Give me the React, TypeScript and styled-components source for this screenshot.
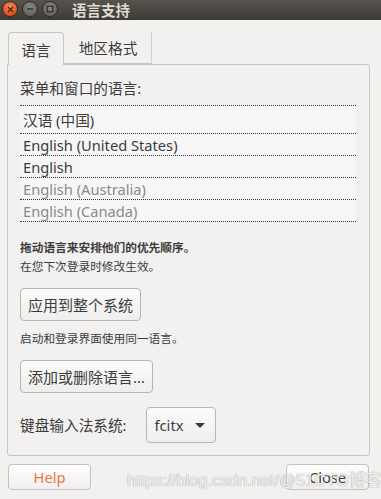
import React from "react";
import styled, { createGlobalStyle } from "styled-components";

const FONT = `"Noto Sans", "Noto Sans CJK SC", "DejaVu Sans", sans-serif`;

const Global = createGlobalStyle`
  html, body { margin: 0; padding: 0; background: #f2f1f0; }
  body { font-family: ${FONT}; color: #3c3c3c; }
  * { box-sizing: border-box; }
`;

const Window = styled.div`
  position: relative;
  width: 381px;
  height: 499px;
  background: #f2f1f0;
  overflow: hidden;
  display: flex;
  flex-direction: column;
`;

const TitleBar = styled.div`
  height: 20px;
  background: linear-gradient(#57534d, #3d3b37);
  display: flex;
  align-items: flex-start;
  padding-left: 2px;
  padding-top: 1px;
  gap: 4px;
`;

const WinBtn = styled.div<{ $close?: boolean }>`
  width: 16px;
  height: 16px;
  border-radius: 50%;
  background: ${(p) =>
    p.$close
      ? "radial-gradient(circle at 50% 35%, #f58a5c, #e1501d 70%)"
      : "radial-gradient(circle at 50% 35%, #8a8883, #67655f 70%)"};
  border: 1px solid #2e2d2a;
  display: flex;
  align-items: center;
  justify-content: center;
`;

const Title = styled.div`
  margin-left: 10px;
  margin-top: -1px;
  font-size: 14.5px;
  font-weight: bold;
  color: #dfdbd2;
  line-height: 20px;
`;

const Body = styled.div`
  flex: 1;
  display: flex;
  flex-direction: column;
  padding: 12px 11px 0 7px;
`;

const TabRow = styled.div`
  display: flex;
  height: 32px;
  position: relative;
  z-index: 1;
  padding-left: 1px;
`;

const Tab = styled.div<{ $active?: boolean }>`
  height: ${(p) => (p.$active ? "33px" : "32px")};
  width: ${(p) => (p.$active ? "56px" : "88px")};
  display: flex;
  align-items: center;
  justify-content: center;
  white-space: nowrap;
  font-size: 14.67px;
  color: #3c3c3c;
  background: #f2f1f0;
  border: 1px solid transparent;
  ${(p) =>
    p.$active
      ? `border-color: #c6c4c0; border-bottom: none; border-radius: 4px 4px 0 0;`
      : `border-right-color: #d4d2ce; border-bottom: 1px solid #c6c4c0; border-top: none;`}
`;

const Panel = styled.div`
  border: 1px solid #c6c4c0;
  border-radius: 0 3px 3px 3px;
  height: 392px;
  padding: 13px 12px 12px 12px;
  display: flex;
  flex-direction: column;
  align-items: flex-start;
`;

const Label = styled.div`
  font-size: 14.67px;
  line-height: 20px;
  color: #3c3c3c;
`;

const List = styled.div`
  align-self: stretch;
  margin-top: 7px;
  background: #f6f6f6;
  border-top: 1px dotted #333;
  margin-right: 1px;
`;

const Row = styled.div<{ $dim?: boolean; $tall?: boolean }>`
  height: ${(p) => (p.$tall ? "28px" : "22px")};
  border-bottom: 1px dotted #333;
  display: flex;
  align-items: center;
  padding-left: 3px;
  font-size: 14.67px;
  color: ${(p) => (p.$dim ? "#8a8a8a" : "#3c3c3c")};
`;

const Note = styled.div<{ $bold?: boolean; $mt?: number }>`
  font-size: 11.7px;
  line-height: 19px;
  font-weight: ${(p) => (p.$bold ? "bold" : "normal")};
  color: #3c3c3c;
  margin-top: ${(p) => p.$mt ?? 0}px;
  white-space: nowrap;
`;

const Button = styled.div<{ $mt?: number }>`
  margin-top: ${(p) => p.$mt ?? 0}px;
  height: 33px;
  padding: 0 7px;
  display: flex;
  align-items: center;
  font-size: 15px;
  color: #3c3c3c;
  border: 1px solid #b8b6b2;
  border-radius: 4px;
  background: linear-gradient(#fbfbfa, #efeeec);
`;

const KbRow = styled.div`
  margin-top: 14px;
  display: flex;
  align-items: center;
  gap: 19px;
`;

const Combo = styled.div`
  height: 36px;
  width: 70px;
  padding: 0 8px;
  display: flex;
  align-items: center;
  justify-content: space-between;
  font-size: 14.67px;
  color: #3c3c3c;
  border: 1px solid #b8b6b2;
  border-radius: 4px;
  background: linear-gradient(#fbfbfa, #efeeec);
`;

const Arrow = styled.div`
  width: 0;
  height: 0;
  border-left: 5px solid transparent;
  border-right: 5px solid transparent;
  border-top: 5px solid #3c3c3c;
  margin-right: 2px;
`;

const Footer = styled.div`
  display: flex;
  justify-content: space-between;
  margin-top: 8px;
  padding-left: 1px;
  padding-right: 1px;
`;

const FootBtn = styled.div<{ $help?: boolean }>`
  width: 83px;
  height: 26px;
  display: flex;
  align-items: center;
  justify-content: center;
  font-size: 14.67px;
  color: ${(p) => (p.$help ? "#ec7448" : "#3c3c3c")};
  border: 1px solid #c4c2be;
  border-radius: 4px;
  background: linear-gradient(#fdfdfc, #f1f0ee);
`;

const Watermark = styled.div`
  position: absolute;
  left: 127px;
  top: 467px;
  font-family: "Liberation Sans", "Noto Sans CJK SC", sans-serif;
  font-size: 16.5px;
  color: rgba(252, 252, 252, 0.9);
  text-shadow: 0 0 1px rgba(150, 150, 150, 0.9), 0 0 1px rgba(150, 150, 150, 0.6);
  white-space: nowrap;
  pointer-events: none;
`;

export default function App() {
  return (
    <>
      <Global />
      <Window>
        <TitleBar>
          <WinBtn $close>
            <svg width="7" height="7" viewBox="0 0 7 7">
              <path d="M1 1L6 6M6 1L1 6" stroke="#4a2213" strokeWidth="1.4" />
            </svg>
          </WinBtn>
          <WinBtn>
            <svg width="8" height="8" viewBox="0 0 8 8">
              <path d="M1 4H7" stroke="#2f2e2b" strokeWidth="1.4" />
            </svg>
          </WinBtn>
          <WinBtn>
            <svg width="8" height="8" viewBox="0 0 8 8">
              <rect x="1.2" y="1.2" width="5.6" height="5.6" fill="none" stroke="#2f2e2b" strokeWidth="1.2" />
            </svg>
          </WinBtn>
          <Title>语言支持</Title>
        </TitleBar>
        <Body>
          <TabRow>
            <Tab $active>语言</Tab>
            <Tab>地区格式</Tab>
          </TabRow>
          <Panel>
            <Label>菜单和窗口的语言:</Label>
            <List>
              <Row $tall>汉语 (中国)</Row>
              <Row>English (United States)</Row>
              <Row>English</Row>
              <Row $dim>English (Australia)</Row>
              <Row $dim>English (Canada)</Row>
            </List>
            <Note $bold $mt={16}>拖动语言来安排他们的优先顺序。</Note>
            <Note>在您下次登录时修改生效。</Note>
            <Button $mt={12}>应用到整个系统</Button>
            <Note $mt={8}>启动和登录界面使用同一语言。</Note>
            <Button $mt={12}>添加或删除语言...</Button>
            <KbRow>
              <Label>键盘输入法系统:</Label>
              <Combo>
                fcitx
                <Arrow />
              </Combo>
            </KbRow>
          </Panel>
          <Footer>
            <FootBtn $help>Help</FootBtn>
            <FootBtn>Close</FootBtn>
          </Footer>
        </Body>
        <Watermark>https://blog.csdn.net/@51CTO博客</Watermark>
      </Window>
    </>
  );
}
